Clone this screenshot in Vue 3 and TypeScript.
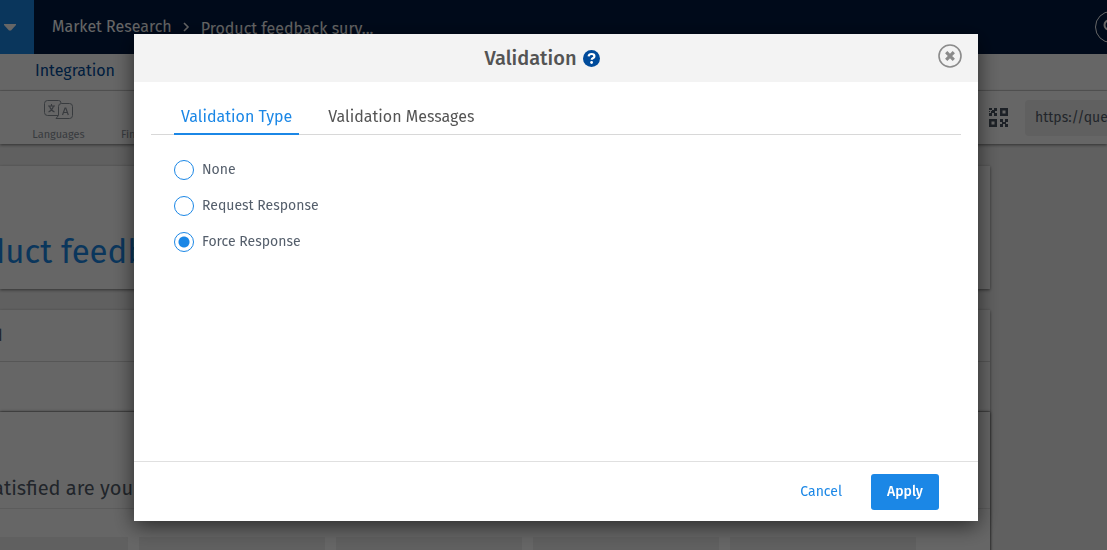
<script setup lang="ts">
import { ref } from 'vue'

const tabs = ['Validation Type', 'Validation Messages']
const activeTab = ref(tabs[0])

const options = ['None', 'Request Response', 'Force Response']
const selected = ref('Force Response')

const tiles = [1, 2, 3, 4, 5]
</script>

<template>
  <div class="page">
    <header class="topbar">
      <button class="product" type="button" aria-label="Switch product">
        <svg width="12" height="7" viewBox="0 0 12 7"><path d="M0 0h12v1L7 6.5H5L0 1z" fill="currentColor" /></svg>
      </button>
      <nav class="crumbs" aria-label="Breadcrumb">
        <a href="#">Market Research</a>
        <svg width="7" height="10" viewBox="0 0 7 10"><path d="M1 1l4 4-4 4" fill="none" stroke="currentColor" stroke-width="1.6" /></svg>
        <a href="#" class="current">Product feedback surv...</a>
      </nav>
      <button class="search" type="button" aria-label="Search">
        <svg width="16" height="16" viewBox="0 0 16 16"><circle cx="6" cy="6" r="4.5" fill="none" stroke="currentColor" stroke-width="2" /><path d="M9 9l5 5" stroke="currentColor" stroke-width="2" /></svg>
      </button>
    </header>

    <nav class="subnav"><a href="#">Integration</a></nav>

    <div class="toolbar">
      <button class="tool languages" type="button">
        <svg width="29" height="20" viewBox="0 0 29 20" fill="none" stroke="currentColor">
          <path d="M17 3.500V3q0-2.500-2.500-2.500h-11q-3 0-3 3v9q0 3 3 3H14" />
          <path d="M17.500 3.500h8q3 0 3 3v9q0 3-3 3H12l2.500-3v-9q0-3 3-3z" />
          <path d="M4 6h7M7.500 4v2M9.500 6q-1 4-5 6M5.500 6q1 4 5 6" stroke-width="1.100" />
          <path d="M18.500 15l2.500-7h.8l2.500 7M19.500 12.500h4" stroke-width="1.200" />
        </svg>
        <span>Languages</span>
      </button>
      <button class="tool find" type="button"><span>Find</span></button>
      <div class="share">
        <svg width="19" height="19" viewBox="0 0 19 19" fill="currentColor" aria-label="QR code">
          <path fill-rule="evenodd" d="M11 0h8v8h-8zM13.500 2.500v3h3v-3zM0 11h8v8H0zM2.500 13.500v3h3v-3z" />
          <path d="M0 0h3v2H0zM5 0h3v3H5zM3 2h2v1H3zM2 3h4v2H2zM0 5h3v3H0zM5 5h3v3H5zM0 3h1v1H0z" />
          <path d="M11 11h3v3h-3zM16 11h3v3h-3zM13 14h4v2h-4zM11 16h3v3h-3zM16 16h3v3h-3z" />
        </svg>
        <input type="text" value="https://questionpro.com" aria-label="Survey link" readonly />
      </div>
    </div>

    <main class="canvas">
      <section class="card title-card"><h1>Product feedback</h1></section>
      <section class="card block">
        <div class="row"><span>Added</span></div>
        <div class="row"></div>
        <div class="question">
          <h2>How satisfied are you</h2>
          <div class="tiles"><div v-for="tile in tiles" :key="tile" class="tile"></div></div>
        </div>
      </section>
    </main>
  </div>

  <div class="overlay">
    <section class="dialog" role="dialog" aria-modal="true" aria-labelledby="dialog-title">
      <header class="dialog-head">
        <h2 id="dialog-title">Validation</h2>
        <button class="help" type="button" aria-label="Help">
          <svg width="17" height="17" viewBox="0 0 17 17">
            <circle cx="8.500" cy="8.500" r="8.500" fill="#004b9b" />
            <path d="M5.600 6.400Q6 4 8.600 4q2.800 0 2.800 2.200 0 1.200-1.300 1.900-1.400.7-1.400 1.700" fill="none" stroke="#fff" stroke-width="2.200" />
            <circle cx="8.600" cy="12.500" r="1.400" fill="#fff" />
          </svg>
        </button>
        <button class="close" type="button" aria-label="Close">
          <svg width="24" height="24" viewBox="0 0 24 24" fill="none" stroke="#8b8b8b">
            <circle cx="12" cy="12" r="11" stroke-width="1.600" />
            <path d="M8.200 8.200l7.600 7.600M15.800 8.200l-7.600 7.600" stroke-width="3.200" />
          </svg>
        </button>
      </header>

      <div class="dialog-body">
        <div class="tabs" role="tablist">
          <button v-for="tab in tabs" :key="tab" type="button" role="tab" :aria-selected="tab === activeTab" :class="{ active: tab === activeTab }" @click="activeTab = tab">{{ tab }}</button>
        </div>
        <div v-if="activeTab === tabs[0]" class="options" role="radiogroup" aria-label="Validation Type">
          <label v-for="option in options" :key="option">
            <input v-model="selected" type="radio" name="validation" :value="option" />
            <span>{{ option }}</span>
          </label>
        </div>
      </div>

      <footer class="dialog-foot">
        <button class="cancel" type="button">Cancel</button>
        <button class="apply" type="button">Apply</button>
      </footer>
    </section>
  </div>
</template>

<style>
body { overflow: hidden; }
</style>

<style scoped>
.page, .overlay { font-family: "Fira Sans", Roboto, "Noto Sans", sans-serif; }
* { box-sizing: border-box; }
button, input { font: inherit; margin: 0; }
button { border: 0; padding: 0; background: none; color: inherit; cursor: pointer; }
a { color: inherit; text-decoration: none; }
h1, h2 { margin: 0; font-weight: 400; }
svg { display: block; flex: none; }

.page { height: 100vh; overflow: hidden; background: #f0f0f0; color: #545e6b; }
.topbar { display: flex; align-items: center; height: 54px; background: #001a43; color: #fff; overflow: hidden; }
.product { width: 34px; height: 54px; padding-left: 4px; background: #1b87e6; flex: none; }
.crumbs { display: flex; align-items: center; flex: 1; margin-left: 18px; gap: 11px; font-size: 16px; line-height: 20px; white-space: nowrap; }
.crumbs .current { padding-top: 4px; }
.search { width: 32px; height: 32px; flex: none; margin-right: -20px; padding-left: 7px; border: 1px solid #fff; border-radius: 50%; }
.subnav { height: 37px; padding-left: 35px; background: #fff; border-bottom: 1px solid #d8d8d8; color: #004b9b; font-size: 16px; line-height: 34px; }
.toolbar { display: flex; height: 53px; background: #fff; box-shadow: 0 1px 3px rgba(0, 0, 0, .5); color: #8c939c; }
.tool { display: flex; flex-direction: column; align-items: center; justify-content: flex-end; padding-bottom: 3px; gap: 8px; font-size: 11px; line-height: 13px; white-space: nowrap; }
.languages { width: 117px; }
.find { margin-left: 4px; }
.share { display: flex; flex: none; align-items: center; gap: 17px; margin-left: auto; color: #4a5461; }
.share input { width: 82px; height: 36px; padding: 0 0 0 10px; border: 0; border-radius: 4px 0 0 4px; background: #f0f0f0; color: #545e6b; font-size: 14px; outline: 0; }

.canvas { padding: 22px 117px 0 0; }
.card { background: #fff; box-shadow: 0 1px 3px rgba(0, 0, 0, .5); }
.title-card { height: 123px; margin-bottom: 21px; padding-top: 65px; }
.title-card h1 { margin-left: -64px; color: #1b87e6; font-size: 33px; line-height: 42px; white-space: nowrap; }
.row { height: 52px; border-bottom: 1px solid #d8d8d8; line-height: 52px; }
.row span { margin-left: -44px; font-size: 16px; }
.row + .row { height: 50px; }
.question { height: 160px; box-shadow: 0 0 3px rgba(0, 0, 0, .7); }
.question h2 { height: 97px; padding-top: 62px; border-bottom: 1px solid #e6e6e6; text-indent: -61px; font-size: 20px; line-height: 28px; white-space: nowrap; }
.tiles { display: flex; gap: 11px; margin: 28px 74px 0 -58px; }
.tile { flex: 1; height: 34px; background: #f0f0f0; }

.overlay { position: fixed; inset: 0; padding: 34px 129px 29px 134px; background: rgba(0, 0, 0, .6); overflow: hidden; }
.dialog { background: #fff; box-shadow: 0 5px 20px rgba(0, 0, 0, .6); }
.dialog-head { position: relative; display: flex; align-items: center; justify-content: center; gap: 6px; height: 48px; padding-right: 28px; background: #f3f3f3; color: #545454; }
.dialog-head h2 { font-size: 20px; font-weight: 500; line-height: 24px; }
.close { position: absolute; top: 10px; right: 16px; }
.dialog-body { min-height: 379px; padding: 16px 17px; }
.tabs { display: flex; gap: 22px; height: 37px; padding-left: 23px; border-bottom: 1px solid #d8d8d8; }
.tabs button { height: 37px; padding: 2px 7px 0; border-bottom: 2px solid transparent; color: #545454; font-size: 16px; line-height: 34px; }
.tabs .active { border-color: #1b87e6; color: #1b87e6; }
.options { display: flex; flex-direction: column; align-items: flex-start; gap: 16px; padding: 25px 23px; }
.options label { display: flex; align-items: center; gap: 8px; color: #545e6b; font-size: 14px; line-height: 20px; }
.options input { appearance: none; width: 20px; height: 20px; border: 1px solid #1b87e6; border-radius: 50%; background: #fff; }
.options input:checked { background: radial-gradient(circle, #1b87e6 5px, #fff 6px); }
.dialog-foot { display: flex; justify-content: flex-end; align-items: center; gap: 29px; height: 60px; padding-right: 39px; border-top: 1px solid #e0e0e0; font-size: 14px; }
.cancel { color: #1b87e6; }
.apply { width: 68px; height: 36px; border-radius: 3px; background: #1b87e6; color: #fff; font-weight: 500; }
</style>
